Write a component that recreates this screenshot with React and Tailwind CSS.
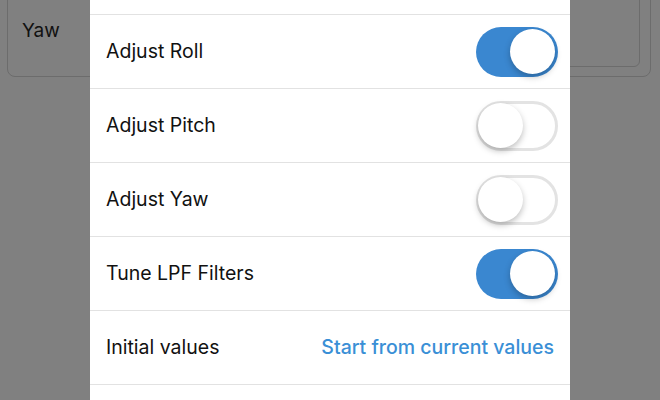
function Toggle({ on }) {
  return (
    <div
      className={
        'relative w-[82px] h-[50px] rounded-full ' +
        (on ? 'bg-[#3a87d0]' : 'bg-white border-[3px] border-[#e3e3e3]')
      }
    >
      <div
        className={
          'absolute w-[45px] h-[45px] rounded-full bg-white shadow-[0_3px_6px_rgba(0,0,0,0.25)] ' +
          (on ? 'top-[2.5px] right-[3px]' : 'left-[-1px] top-[-0.5px]')
        }
      />
    </div>
  )
}

function Row({ label, children }) {
  return (
    <div className="h-[74px] flex items-center justify-between pl-4 pr-3 border-b border-[#e2e2e2]">
      <span className="text-[19.5px] text-[#111]">{label}</span>
      {children}
    </div>
  )
}

export default function App() {
  return (
    <div
      className="relative w-[660px] h-[400px] overflow-hidden bg-[#808080]"
      style={{ fontFamily: 'Inter, "Liberation Sans", sans-serif' }}
    >
      {/* page behind the sheet */}
      <div className="ml-[7px] mr-[9px] mt-[-20px] h-[97px] rounded-b-[8px] border border-[#6c6c6c] flex">
        <div className="pl-[14px] pt-[36px] text-[19px] text-[#111]">Yaw</div>
        <div className="flex-1 flex justify-end pr-[10px]">
          <div className="w-[200px] h-[86px] rounded-b-[6px] border border-[#6c6c6c]" />
        </div>
      </div>

      {/* settings sheet */}
      <div className="absolute left-[90px] top-0 w-[480px] h-[400px] bg-white">
        <div className="h-[15px] border-b border-[#e2e2e2]" />
        <Row label="Adjust Roll"><Toggle on /></Row>
        <Row label="Adjust Pitch"><Toggle /></Row>
        <Row label="Adjust Yaw"><Toggle /></Row>
        <Row label="Tune LPF Filters"><Toggle on /></Row>
        <Row label="Initial values">
          <span className="text-[19.5px] font-medium text-[#3a8fd6] pr-[4px]">Start from current values</span>
        </Row>
      </div>
    </div>
  )
}
